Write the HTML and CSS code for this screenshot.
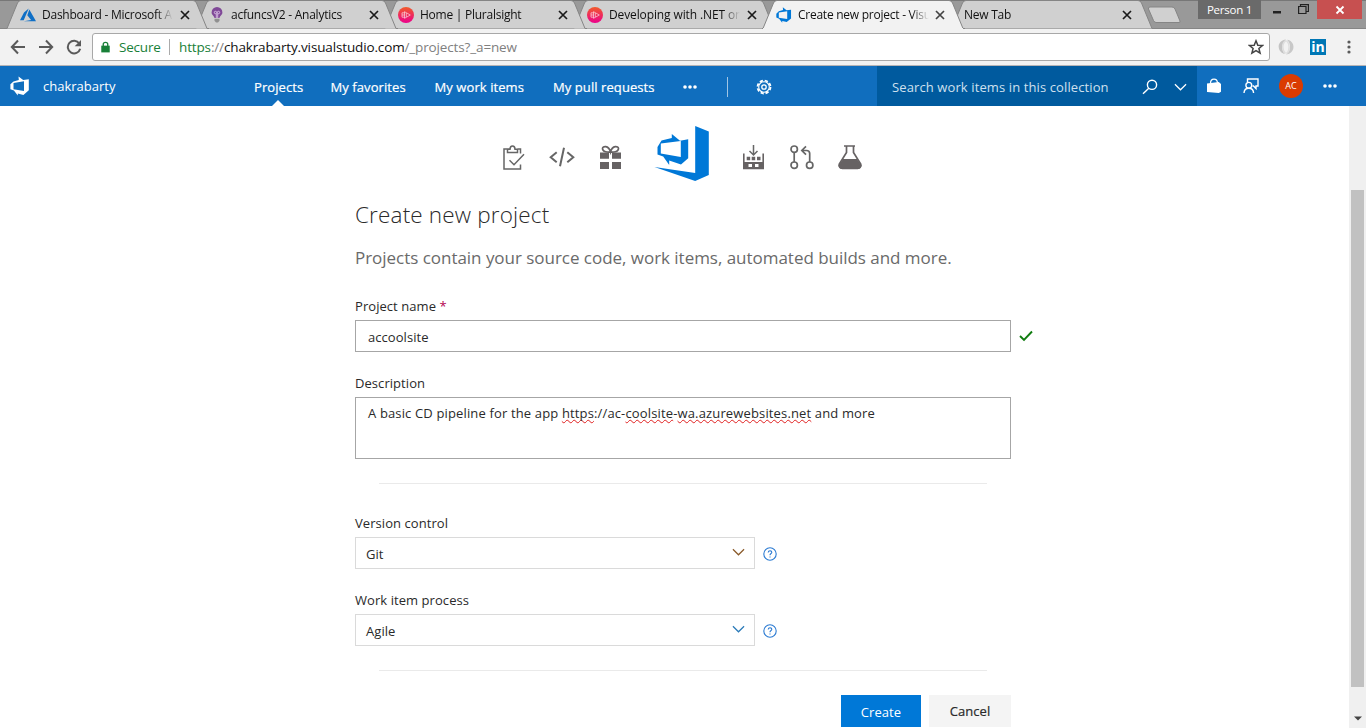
FILE: index.html
```html
<!DOCTYPE html>
<html lang="en">
<head>
<meta charset="utf-8">
<title>Create new project - Visual Studio Team Services</title>
<link rel="stylesheet" href="styles.css">
</head>
<body>
<svg class="defs" width="0" height="0">
  <defs>
    <linearGradient id="ps" x1="0" y1="0" x2="0" y2="1"><stop offset="0" stop-color="#f15b2a"/><stop offset="1" stop-color="#ec008c"/></linearGradient>
    <symbol id="tab" viewBox="0 0 203 29"><path d="M0 28.5H1L11.5 3Q12.500 .5 15 .5H187Q189.500 .5 190.500 3L201 28.500H203"/></symbol>
    <symbol id="close" viewBox="0 0 10 10"><path d="M1 1L9 9M9 1L1 9" fill="none" stroke="currentColor" stroke-width="1.7"/></symbol>
    <symbol id="pluralsight" viewBox="0 0 16 16"><circle cx="8" cy="8" r="8" fill="url(#ps)"/><path d="M6.500 4.700L12.300 8L6.500 11.300ZM6.500 5.800H4V10.200H6.500M4 8H6.500M8.300 6V10" fill="none" stroke="#fff" stroke-opacity=".7" stroke-width=".8"/></symbol>
    <symbol id="vsts" viewBox="0 0 20 20"><path fill-rule="evenodd" d="M3.500 5.400L8.800 3.900L8.500 .4L13.200 4L18.800 3.300V14.300L13.400 18.900L7.800 17.500V19.600L3.900 14.600L.4 13.200V8.300ZM3.500 7V13.300L14 14.900V5.200Z"/></symbol>
    <symbol id="more" viewBox="0 0 14 4"><circle cx="2" cy="2" r="1.800"/><circle cx="7" cy="2" r="1.800"/><circle cx="12" cy="2" r="1.800"/></symbol>
    <symbol id="chev" viewBox="0 0 14 8"><path d="M1 1L7 7L13 1" fill="none" stroke="currentColor" stroke-width="1.300"/></symbol>
    <symbol id="help" viewBox="0 0 14 14"><circle cx="7" cy="7" r="6.200" fill="none" stroke="#2a7ad2" stroke-width="1.100"/><path d="M5.200 5.500Q5.300 3.800 7.100 3.800Q8.800 3.900 8.800 5.300Q8.800 6.200 7.800 6.800Q7 7.300 7 8.300M7 9.400V10.600" fill="none" stroke="#2a7ad2" stroke-width="1.100"/></symbol>
  </defs>
</svg>

<div class="tabstrip">
  <div class="tab t1">
    <svg class="shape"><use href="#tab"/></svg>
    <svg class="favicon" viewBox="0 0 16 16"><path fill="#0f6fc6" d="M8.700 1.500L4 5.500L0 13.200H3.700ZM9.300 2.600L7.300 8.200L11.100 13L3.800 14.300H16Z"/></svg>
    <span class="title">Dashboard - Microsoft A</span>
    <svg class="close"><use href="#close"/></svg>
  </div>
  <div class="tab t2">
    <svg class="shape"><use href="#tab"/></svg>
    <svg class="favicon" viewBox="0 0 16 16"><path fill="#804998" d="M8 0A5.400 5.400 0 0 1 13.400 5.400C13.400 8 10.900 8.500 10.500 11H5.500C5.100 8.500 2.600 8 2.600 5.400A5.400 5.400 0 0 1 8 0Z"/><path d="M7.300 11V6.500M8.700 11V6.500" stroke="#e5cdef" stroke-width=".8"/><circle cx="6.500" cy="5.500" r="1.200" fill="none" stroke="#e5cdef" stroke-width=".8"/><circle cx="9.500" cy="5.500" r="1.200" fill="none" stroke="#e5cdef" stroke-width=".8"/><path fill="#909090" d="M5.500 11.700H10.500V13.700L9 15.500H7L5.500 13.700Z"/></svg>
    <span class="title">acfuncsV2 - Analytics</span>
    <svg class="close"><use href="#close"/></svg>
  </div>
  <div class="tab t3">
    <svg class="shape"><use href="#tab"/></svg>
    <svg class="favicon"><use href="#pluralsight"/></svg>
    <span class="title">Home | Pluralsight</span>
    <svg class="close"><use href="#close"/></svg>
  </div>
  <div class="tab t4">
    <svg class="shape"><use href="#tab"/></svg>
    <svg class="favicon"><use href="#pluralsight"/></svg>
    <span class="title">Developing with .NET on</span>
    <svg class="close"><use href="#close"/></svg>
  </div>
  <div class="tab t5 active">
    <svg class="shape"><use href="#tab"/></svg>
    <svg class="favicon blue"><use href="#vsts"/></svg>
    <span class="title">Create new project - Visu</span>
    <svg class="close"><use href="#close"/></svg>
  </div>
  <div class="tab t6">
    <svg class="shape"><use href="#tab"/></svg>
    <span class="title">New Tab</span>
    <svg class="close"><use href="#close"/></svg>
  </div>
  <svg class="newtab" viewBox="0 0 34 18"><path d="M3 1H25Q27 1 28 3L33 15Q33.500 16.500 32 16.500H9Q7.500 16.500 6.500 14.500L1.500 3Q1 1 3 1Z" fill="#d0d0d0" stroke="#858585"/></svg>
  <div class="window">
    <span class="person">Person 1</span>
    <svg class="min" viewBox="0 0 8 3"><path d="M0 0H8V2.500H0Z" fill="#222"/></svg>
    <svg class="restore" viewBox="0 0 11 10"><path d="M.6 2.500H8V9.500H.6ZM2.500 2.500V.6H10.400V7.500H8" fill="none" stroke="#222" stroke-width="1.200"/></svg>
    <span class="exit"><svg viewBox="0 0 10 10"><path d="M1.500 1.500L8.500 8.500M8.500 1.500L1.500 8.500" stroke="#fff" stroke-width="1.800"/></svg></span>
  </div>
</div>

<div class="toolbar">
  <svg class="nav" viewBox="0 0 16 16"><path d="M15 8H2M8 1.500L1.800 8L8 14.500" /></svg>
  <svg class="nav" viewBox="0 0 16 16"><path d="M1 8H14M8 1.500L14.200 8L8 14.500" /></svg>
  <svg class="nav" viewBox="0 0 16 16"><path d="M13.300 4.500A6.300 6.300 0 1 0 14.200 9.800"/><path class="solid" d="M15 1V7.200H8.700Z"/></svg>
  <div class="address">
    <svg class="lock" viewBox="0 0 10 12"><path d="M2.500 5V3A2.500 2.200 0 0 1 7.500 3V5" fill="none" stroke="#188038" stroke-width="1.500"/><path d="M.3 4.500H9.700V12H.3Z" fill="#188038"/></svg>
    <span class="secure">Secure</span>
    <span class="url"><span class="green">https</span><span class="gray">://</span>chakrabarty.visualstudio.com<span class="gray">/_projects?_a=new</span></span>
    <svg class="star" viewBox="0 0 16 16"><path d="M8 1.800L9.800 6.200L14.500 6.500L10.900 9.500L12.100 14.200L8 11.600L3.900 14.200L5.100 9.500L1.500 6.500L6.200 6.200Z" fill="none" stroke="#444" stroke-width="1.500"/></svg>
  </div>
  <svg class="ext" viewBox="0 0 16 16"><path d="M8 .5C3 1 0 4.500 .8 9C1.300 12 4 14.500 7 15C3.500 12 2.800 4.500 8 .5Z" fill="#c4c4c4"/><path d="M9 .8C14 1.500 16.300 5.500 15.200 10C14.300 13 11.500 15.300 8 15.500C13 12.500 13.300 5 9 .8Z" fill="#c8c8c8"/><path d="M8 1.500C3.800 4 3.800 11 7.500 14.500M8.500 1.500C12 5 12 11.500 8.500 14.500" fill="none" stroke="#dedede" stroke-width="1.500"/></svg>
  <span class="linkedin">in</span>
  <svg class="menu" viewBox="0 0 4 14"><circle cx="2" cy="2" r="1.600"/><circle cx="2" cy="7" r="1.600"/><circle cx="2" cy="12" r="1.600"/></svg>
</div>

<header class="header">
  <svg class="brand"><use href="#vsts"/></svg>
  <span class="account">chakrabarty</span>
  <nav class="links">
    <span class="link current l1">Projects</span>
    <span class="link l2">My favorites</span>
    <span class="link l3">My work items</span>
    <span class="link l4">My pull requests</span>
    <svg class="dots"><use href="#more"/></svg>
    <i class="rule"></i>
    <svg class="gear" viewBox="0 0 16 16"><circle cx="8" cy="8" r="6.500" stroke-width="1.800" stroke-dasharray="3.200 1.905"/><circle cx="8" cy="8" r="5.300" stroke-width="1.100"/><circle cx="8" cy="8" r="2.200" stroke-width="1.300"/></svg>
  </nav>
  <div class="search">
    <span>Search work items in this collection</span>
    <svg class="lens" viewBox="0 0 16 16"><circle cx="10" cy="5.800" r="4.600"/><path d="M6.800 9.200L1 14.800"/></svg>
    <svg class="down"><use href="#chev"/></svg>
  </div>
  <div class="tools">
    <svg class="bag" viewBox="0 0 16 16"><path fill="#fff" d="M1 5.500L12.800 4L15 6V13.800L12.800 15L1 14Z"/><path d="M4.500 5.500Q4.500 1.200 8 1.200Q11.200 1.200 11.500 5" fill="none" stroke="#fff" stroke-width="1.300"/></svg>
    <svg class="feedback" viewBox="0 0 16 16"><path d="M4.500 4V1H15V8H13V10.500L10.500 8H9.500"/><circle cx="5.800" cy="7.300" r="2.900"/><path d="M1 15C1.200 12 3 10.300 5.800 10.300S10.400 12 10.600 15"/></svg>
    <span class="avatar">AC</span>
    <svg class="dots"><use href="#more"/></svg>
  </div>
</header>

<div class="page">
  <main class="form">
    <div class="hero">
      <svg class="h1i" viewBox="0 0 22 25"><path d="M6.500 4H1V24H17.500V19.500M14.500 4H17.500V8.500M4.500 7.500V4.300H7Q7 1 9.500 1T12 4.300H14.500V7.500ZM6.500 15.300L11 19.800L21 9.300" fill="none" stroke="#666" stroke-width="1.500"/></svg>
      <svg class="h2i" viewBox="0 0 26 20"><path d="M7.700 5.200L1.700 10.200L7.700 15.200M18.300 5.200L24.300 10.200L18.300 15.200M15 .8L11 19.300" fill="none" stroke="#666" stroke-width="2"/></svg>
      <svg class="h3i" viewBox="0 0 21 25"><path d="M0 7.500H9V13.700H0ZM12 7.500H21V13.700H12ZM0 17H9V24H0ZM12 17H21V24H12Z" fill="#666263"/><path d="M10.500 7C8 7.500 2.500 7 2.500 3.500C2.500 1 8.500 -.2 10.500 7C12.500 -.2 18.500 1 18.500 3.500C18.500 7 13 7.500 10.500 7Z" fill="none" stroke="#666263" stroke-width="1.700"/></svg>
      <svg class="logo" viewBox="0 0 54 56"><path fill="#0078d7" d="M40.700 0L54.300 5.500V49L40.700 55L0 41L40.700 47Z"/><path fill="#0078d7" fill-rule="evenodd" d="M3 21L7 14.500L17.300 12V8L25.500 14.700L33.700 13.300V32.300L26.500 38.500L14.700 34.500V39L8.700 30.500L3 28.500ZM6.300 17.500V27.500L26.300 31V15Z"/></svg>
      <svg class="h4i" viewBox="0 0 21 25"><path d="M.8 8.500V23.500H20.200V8.500" fill="none" stroke="#666263" stroke-width="1.600"/><path fill="#666263" fill-rule="evenodd" d="M3.700 11.700H7.200V15.200H3.700ZM8.700 11.700H12.200V15.200H8.700ZM14 11.700H17.500V15.200H14ZM0 17H21V24H0ZM5.500 19V22H9V19ZM12 19V22H15.500V19Z"/><path d="M10.500 0V10M6.500 6L10.500 10L14.500 6" fill="none" stroke="#666" stroke-width="1.500"/></svg>
      <svg class="h5i" viewBox="0 0 24 25"><g fill="none" stroke="#666" stroke-width="1.700"><circle cx="4.200" cy="4.200" r="3.200"/><circle cx="4.200" cy="20.200" r="3.200"/><circle cx="19.700" cy="20.200" r="3.200"/><path d="M4.200 7.500V17M19.700 17V8.500Q19.700 5.500 16.500 5.500H12M16 1.300L11.800 5.500L16 9.700"/></g></svg>
      <svg class="h6i" viewBox="0 0 24 25"><path d="M6 1H17M8.500 1V7.500L1.300 19Q.5 23 4.500 23.500H19.500Q23.500 23 22.700 19L15.500 7.500V1" fill="none" stroke="#666263" stroke-width="1.700"/><path fill="#666263" d="M5 14H19L23.500 20.500Q23 24 19.500 24H4.500Q1 24 .5 20.500Z"/></svg>
    </div>
    <h1>Create new project</h1>
    <p class="lead">Projects contain your source code, work items, automated builds and more.</p>
    <label class="label">Project name <span class="req">*</span></label>
    <div class="row">
      <div class="input">accoolsite</div>
      <svg class="check" viewBox="0 0 14 12"><path d="M1 6L5 10L13 1.500" fill="none" stroke="#107c10" stroke-width="1.900"/></svg>
    </div>
    <label class="label desc">Description</label>
    <div class="textarea">A basic CD pipeline for the app <u>https</u>://ac-<u>coolsite</u>-<u>wa.azurewebsites.net</u> and more</div>
    <hr>
    <label class="label vc">Version control</label>
    <div class="row">
      <div class="select"><span>Git</span><svg class="arrow git"><use href="#chev"/></svg></div>
      <svg class="help"><use href="#help"/></svg>
    </div>
    <label class="label wp">Work item process</label>
    <div class="row">
      <div class="select"><span>Agile</span><svg class="arrow"><use href="#chev"/></svg></div>
      <svg class="help"><use href="#help"/></svg>
    </div>
    <hr>
    <div class="buttons"><span class="btn primary">Create</span><span class="btn">Cancel</span></div>
  </main>
  <div class="scrollbar"><i class="thumb"></i><svg viewBox="0 0 8 5"><path d="M0 .5H8L4 4.500Z" fill="#444"/></svg></div>
</div>
</body>
</html>
```
FILE: styles.css
```css
* { box-sizing: border-box; }
body {
  margin: 0;
  width: 1366px;
  height: 728px;
  overflow: hidden;
  display: flex;
  flex-direction: column;
  background: #fff;
  color: #2a2a2a;
  font: 13px/18px "Open Sans", "Noto Sans", sans-serif;
  white-space: nowrap;
}
svg { flex: none; display: block; }
.defs { position: absolute; }

/* Tab strip */
.tabstrip {
  flex: none;
  height: 29px;
  display: flex;
  padding-left: 6px;
  background: #999;
  border-top: 1px solid #777;
  box-shadow: inset 0 -1px #858585;
}
.tab {
  position: relative;
  flex: none;
  width: 189px;
  height: 28px;
  display: flex;
  align-items: center;
  padding-left: 14px;
  font-size: 12px;
  letter-spacing: -.25px;
  color: #111;
}
.tab > * { position: relative; }
.tab .shape {
  position: absolute;
  left: 0;
  top: -1px;
  width: 203px;
  height: 29px;
  fill: #d0d0d0;
  stroke: #858585;
}
.t1 { z-index: 6; }
.t2 { z-index: 5; }
.t3 { z-index: 4; }
.t4 { z-index: 3; letter-spacing: -.12px; }
.t5 { z-index: 7; }
.t6 { z-index: 1; width: 188px; padding-left: 13px; }
.active .shape { fill: #f2f2f2; }
.active::after {
  content: "";
  position: absolute;
  left: 1px;
  bottom: 0;
  width: 200px;
  height: 1px;
  background: #f2f2f2;
}
.favicon { width: 16px; height: 16px; }
.blue { fill: #0078d7; }
.title {
  margin-left: 6px;
  width: 132px;
  -webkit-mask-image: linear-gradient(90deg, #000 114px, transparent 131px);
  mask-image: linear-gradient(90deg, #000 114px, transparent 131px);
}
.t6 .title { margin-left: 0; width: 152px; }
.close { width: 10px; height: 10px; margin-left: 6px; color: #1a1a1a; }
.t5 .close { margin-left: 5px; color: #444; }
.newtab { width: 34px; height: 18px; margin: 5px 0 0 8px; }
.window { flex: 1; display: flex; align-items: flex-start; margin-top: -1px; margin-left: 17px; }
.person {
  width: 63px;
  height: 19px;
  background: #6a6a6a;
  color: #fff;
  font-size: 11.500px;
  letter-spacing: -.25px;
  text-align: center;
  line-height: 19px;
}
.min { width: 8px; height: 3px; margin: 11px 0 0 12px; }
.restore { width: 11px; height: 10px; margin: 4px 0 0 17px; }
.exit {
  width: 45px;
  height: 19px;
  margin-left: 8px;
  display: flex;
  align-items: center;
  justify-content: center;
  background: #c75050;
}
.exit svg { width: 10px; height: 10px; }

/* Toolbar */
.toolbar {
  flex: none;
  height: 37px;
  display: flex;
  align-items: center;
  padding: 0 13px 0 10px;
  background: #f2f2f2;
  border-bottom: 1px solid #b6b4b6;
}
.nav { width: 16px; height: 16px; margin-right: 12px; fill: none; stroke: #5a5a5a; stroke-width: 2; }
.nav .solid { fill: #5a5a5a; stroke: none; }
.address {
  width: 1178px;
  height: 28px;
  margin-left: -2px;
  display: flex;
  align-items: center;
  padding-left: 8px;
  background: #fff;
  border: 1px solid #a8a8a8;
  border-radius: 3px;
  font-size: 13.500px;
}
.lock { width: 9px; height: 12px; }
.secure { width: 51px; margin-left: 9px; color: #188038; border-right: 1px solid #aaa; line-height: 16px; letter-spacing: -.2px; }
.url { margin-left: 9px; color: #111; letter-spacing: -.14px; }
.green { color: #188038; }
.gray { color: #808080; }
.star { width: 16px; height: 16px; margin-left: auto; margin-right: 5px; }
.ext { width: 16px; height: 16px; margin-left: 8px; }
.linkedin {
  width: 16px;
  height: 16px;
  margin-left: 16px;
  background: #0077b5;
  color: #fff;
  font: bold 14px/15px "Open Sans", sans-serif;
  text-align: center;
}
.menu { width: 4px; height: 14px; margin-left: 21px; fill: #5a5a5a; }

/* Product header */
.header {
  flex: none;
  height: 40px;
  display: flex;
  align-items: center;
  background: #106ebe;
  color: #fff;
}
.brand { width: 20px; height: 20px; margin-left: 10px; fill: #fff; }
.account { width: 211px; margin-left: 13px; }
.links { display: flex; align-items: center; height: 40px; width: 623px; padding-top: 2px; letter-spacing: .08px; -webkit-text-stroke: .2px #fff; }
.link { position: relative; }
.l1 { width: 76.500px; }
.l2 { width: 104px; }
.l3 { width: 118.500px; }
.l4 { width: 130px; }
.current::after {
  content: "";
  position: absolute;
  left: 18px;
  bottom: -10px;
  border: 6px solid transparent;
  border-top: 0;
  border-bottom-color: #fff;
}
.dots { width: 14px; height: 4px; fill: #fff; }
.rule { width: 1px; height: 20px; margin-left: 30px; background: #a0c5e5; }
.gear { width: 16px; height: 16px; margin-left: 28px; fill: none; stroke: #fff; }
.search {
  width: 320px;
  height: 40px;
  display: flex;
  align-items: center;
  padding: 2px 0 0 15px;
  background: #005a9e;
  color: #cfe0ee;
}
.search span { width: 250px; letter-spacing: .11px; }
.lens { width: 16px; height: 16px; fill: none; stroke: #fff; stroke-width: 1.400; }
.down { width: 13px; height: 8px; margin-left: 16px; color: #fff; }
.tools { display: flex; align-items: center; height: 40px; }
.bag { width: 16px; height: 16px; margin-left: 9px; }
.feedback { width: 16px; height: 16px; margin-left: 21px; fill: none; stroke: #fff; stroke-width: 1.400; }
.avatar {
  width: 24px;
  height: 24px;
  margin: 0 20px;
  border-radius: 50%;
  background: #da3b01;
  font-size: 9px;
  line-height: 24px;
  text-align: center;
}

/* Page */
.page { flex: none; height: 622px; display: flex; }
.form { width: 1349px; flex: none; padding: 20px 0 0 355px; letter-spacing: .06px; }
.hero { display: flex; height: 56px; margin-left: 148px; }
.h1i { width: 22px; height: 25px; margin-top: 19px; }
.h2i { width: 26px; height: 20px; margin: 21px 0 0 24px; }
.h3i { width: 21px; height: 25px; margin: 19px 0 0 25px; }
.logo { width: 55px; height: 56px; margin-left: 33px; }
.h4i { width: 21px; height: 25px; margin: 19px 0 0 34px; }
.h5i { width: 24px; height: 25px; margin: 19px 0 0 26px; }
.h6i { width: 24px; height: 25px; margin: 19px 0 0 24px; }
h1 { margin: 17px 0 0; font-size: 22.500px; line-height: 32px; font-weight: 300; letter-spacing: .16px; }
.lead { margin: 13px 0 0; font-size: 17px; line-height: 27px; height: 26px; color: #6a6a6a; letter-spacing: -.03px; }
.label { display: block; margin-top: 26px; line-height: 20px; height: 20px; }
.req { color: #b4004e; }
.row { display: flex; align-items: center; }
.input {
  width: 656px;
  height: 32px;
  margin-top: 4px;
  padding: 7px 12px 5px;
  border: 1px solid #a6a6a6;
}
.check { width: 14px; height: 12px; margin: 4px 0 0 8px; }
.label.desc { margin-top: 21px; }
.textarea { width: 656px; height: 62px; margin-top: 4px; padding: 6px 12px; border: 1px solid #a6a6a6; letter-spacing: .145px; }
.textarea u { text-decoration: underline wavy #e02020 .7px; text-underline-offset: 1px; text-decoration-skip-ink: none; }
hr { width: 608px; height: 1px; margin: 24px 0 0 24px; border: 0; background: #eaeaea; }
.label.vc { margin-top: 29px; }
.label.wp { margin-top: 21px; }
.select {
  width: 400px;
  height: 32px;
  margin-top: 4px;
  display: flex;
  align-items: center;
  padding: 2px 9px 0 10px;
  border: 1px solid #dadada;
}
.arrow { width: 13px; height: 8px; margin: -4px 0 0 auto; color: #2a7ab8; }
.arrow.git { color: #8a5a2a; }
.help { width: 14px; height: 14px; margin: 5px 0 0 8px; }
.buttons { display: flex; gap: 8px; margin: 24px 0 0 486px; }
.btn { width: 82px; height: 32px; padding-top: 7px; background: #f4f4f4; text-align: center; -webkit-text-stroke: .2px; }
.btn.primary { width: 80px; background: #0078d7; color: #fff; padding-top: 8px; -webkit-text-stroke: 0; }
.scrollbar { flex: 1; display: flex; flex-direction: column; align-items: center; background: #f0f0f0; }
.thumb { width: 13px; height: 497px; margin-top: 84px; background: #c1c1c1; }
.scrollbar svg { width: 8px; height: 5px; margin-top: 29px; }
```
